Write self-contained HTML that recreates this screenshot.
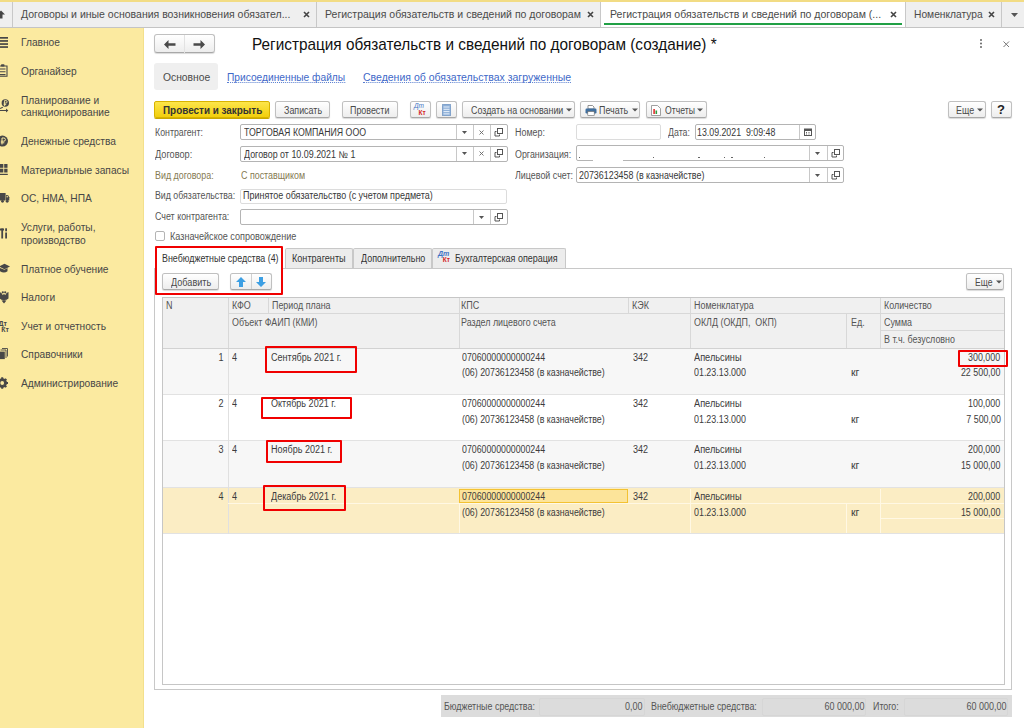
<!DOCTYPE html>
<html><head><meta charset="utf-8"><style>
html,body{margin:0;padding:0;width:1024px;height:728px;overflow:hidden;background:#fff;position:relative}
body>div,body>svg{position:absolute}
.t{white-space:nowrap;font-family:"Liberation Sans",sans-serif}
.btn{background:linear-gradient(#ffffff,#ededed);border:1px solid #c0c0c0;border-bottom-color:#a8a8a8;border-radius:2.5px;box-sizing:border-box;box-shadow:0 1px 1px rgba(0,0,0,.15)}
</style></head><body>
<div style="left:0px;top:0px;width:1024px;height:1.8px;background:#f2dc84"></div>
<div style="left:0px;top:2px;width:1024px;height:25px;background:#efefef"></div>
<div style="left:601px;top:2px;width:304px;height:25px;background:#fff"></div>
<div style="left:0px;top:27px;width:1024px;height:1px;background:#c4c4c4"></div>
<div style="left:12px;top:2px;width:1px;height:25px;background:#c8c8c8"></div>
<div style="left:316px;top:2px;width:1px;height:25px;background:#c8c8c8"></div>
<div style="left:600px;top:2px;width:1px;height:25px;background:#c8c8c8"></div>
<div style="left:905px;top:2px;width:1px;height:25px;background:#c8c8c8"></div>
<div style="left:1001px;top:2px;width:1px;height:25px;background:#c8c8c8"></div>
<div style="left:604px;top:23.3px;width:298px;height:1.9px;background:#21a046"></div>
<div class="t" style="left:21px;top:9.11px;font-size:10.5px;line-height:10.5px;color:#4a4a4a;font-weight:normal;transform:scaleX(1.0);transform-origin:0 0;">Договоры и иные основания возникновения обязател...</div>
<div class="t" style="left:325px;top:9.11px;font-size:10.5px;line-height:10.5px;color:#4a4a4a;font-weight:normal;transform:scaleX(1.0);transform-origin:0 0;">Регистрация обязательств и сведений по договорам</div>
<div class="t" style="left:610px;top:9.11px;font-size:10.5px;line-height:10.5px;color:#4a4a4a;font-weight:normal;transform:scaleX(1.0);transform-origin:0 0;">Регистрация обязательств и сведений по договорам (...</div>
<div class="t" style="left:914px;top:9.11px;font-size:10.5px;line-height:10.5px;color:#4a4a4a;font-weight:normal;transform:scaleX(0.975);transform-origin:0 0;">Номенклатура</div>
<svg style="left:303.0px;top:11px" width="7" height="7" viewBox="0 0 7 7"><path d="M1 1L6 6M6 1L1 6" stroke="#444" stroke-width="1.6"/></svg>
<svg style="left:587.0px;top:11px" width="7" height="7" viewBox="0 0 7 7"><path d="M1 1L6 6M6 1L1 6" stroke="#444" stroke-width="1.6"/></svg>
<svg style="left:890.0px;top:11px" width="7" height="7" viewBox="0 0 7 7"><path d="M1 1L6 6M6 1L1 6" stroke="#444" stroke-width="1.6"/></svg>
<svg style="left:987.5px;top:11px" width="7" height="7" viewBox="0 0 7 7"><path d="M1 1L6 6M6 1L1 6" stroke="#444" stroke-width="1.6"/></svg>
<svg style="left:1011px;top:12.5px" width="7" height="4" viewBox="0 0 7 4"><path d="M0 0H7L3.5 4Z" fill="#555"/></svg>
<svg style="left:-3.5px;top:9.5px" width="8" height="9" viewBox="0 0 8 9"><path d="M0 4.5L4 0.5L8 4.5H5.5V8.5H2.5V4.5Z" fill="#444"/></svg>
<div style="left:0px;top:28px;width:144px;height:700px;background:#fbeaa0"></div>
<div style="left:143px;top:28px;width:1px;height:700px;background:#f3e08c"></div>
<div class="t" style="left:21px;top:38.48px;font-size:10.3px;line-height:10.3px;color:#474747;font-weight:normal;transform:scaleX(0.99);transform-origin:0 0;">Главное</div>
<div class="t" style="left:21px;top:66.78px;font-size:10.3px;line-height:10.3px;color:#474747;font-weight:normal;transform:scaleX(0.99);transform-origin:0 0;">Органайзер</div>
<div class="t" style="left:21px;top:95.58px;font-size:10.3px;line-height:10.3px;color:#474747;font-weight:normal;transform:scaleX(0.99);transform-origin:0 0;">Планирование и</div>
<div class="t" style="left:21px;top:108.48px;font-size:10.3px;line-height:10.3px;color:#474747;font-weight:normal;transform:scaleX(0.99);transform-origin:0 0;">санкционирование</div>
<div class="t" style="left:21px;top:137.38px;font-size:10.3px;line-height:10.3px;color:#474747;font-weight:normal;transform:scaleX(0.99);transform-origin:0 0;">Денежные средства</div>
<div class="t" style="left:21px;top:165.58px;font-size:10.3px;line-height:10.3px;color:#474747;font-weight:normal;transform:scaleX(0.99);transform-origin:0 0;">Материальные запасы</div>
<div class="t" style="left:21px;top:194.28px;font-size:10.3px;line-height:10.3px;color:#474747;font-weight:normal;transform:scaleX(0.99);transform-origin:0 0;">ОС, НМА, НПА</div>
<div class="t" style="left:21px;top:222.58px;font-size:10.3px;line-height:10.3px;color:#474747;font-weight:normal;transform:scaleX(0.99);transform-origin:0 0;">Услуги, работы,</div>
<div class="t" style="left:21px;top:235.58px;font-size:10.3px;line-height:10.3px;color:#474747;font-weight:normal;transform:scaleX(0.99);transform-origin:0 0;">производство</div>
<div class="t" style="left:21px;top:265.08px;font-size:10.3px;line-height:10.3px;color:#474747;font-weight:normal;transform:scaleX(0.99);transform-origin:0 0;">Платное обучение</div>
<div class="t" style="left:21px;top:293.18px;font-size:10.3px;line-height:10.3px;color:#474747;font-weight:normal;transform:scaleX(0.99);transform-origin:0 0;">Налоги</div>
<div class="t" style="left:21px;top:321.78px;font-size:10.3px;line-height:10.3px;color:#474747;font-weight:normal;transform:scaleX(0.99);transform-origin:0 0;">Учет и отчетность</div>
<div class="t" style="left:21px;top:350.28px;font-size:10.3px;line-height:10.3px;color:#474747;font-weight:normal;transform:scaleX(0.99);transform-origin:0 0;">Справочники</div>
<div class="t" style="left:21px;top:379.08px;font-size:10.3px;line-height:10.3px;color:#474747;font-weight:normal;transform:scaleX(0.99);transform-origin:0 0;">Администрирование</div>
<div class="btn" style="left:154.4px;top:34.2px;width:60.2px;height:19.2px;border-radius:3px"></div>
<div style="left:184px;top:35.2px;width:1px;height:17.5px;background:#e2e2e2"></div>
<svg style="left:164px;top:40.2px" width="12" height="9" viewBox="0 0 12 9"><path d="M0 4.5L4.5 0V3.3H11.5V5.7H4.5V9Z" fill="#4a4a4a"/></svg>
<svg style="left:193px;top:40.2px" width="12" height="9" viewBox="0 0 12 9"><path d="M12 4.5L7.5 0V3.3H0.5V5.7H7.5V9Z" fill="#4a4a4a"/></svg>
<div class="t" style="left:251.5px;top:35.71px;font-size:16.4px;line-height:16.4px;color:#111;font-weight:normal;transform:scaleX(0.936);transform-origin:0 0;">Регистрация обязательств и сведений по договорам (создание) *</div>
<svg style="left:979px;top:39px" width="4" height="9" viewBox="0 0 4 9"><circle cx="2" cy="1" r="1" fill="#666"/><circle cx="2" cy="4.5" r="1" fill="#666"/><circle cx="2" cy="8" r="1" fill="#666"/></svg>
<svg style="left:1003px;top:40.5px" width="6.5" height="6.5" viewBox="0 0 6.5 6.5"><path d="M0.5 0.5L6 6M6 0.5L0.5 6" stroke="#777" stroke-width="1"/></svg>
<div style="left:154px;top:63px;width:64px;height:27px;background:#efefef;border-radius:3px"></div>
<div class="t" style="left:163px;top:73.13px;font-size:10px;line-height:10px;color:#4a4a4a;font-weight:normal;transform:scaleX(1.03);transform-origin:0 0;">Основное</div>
<div class="t" style="left:227px;top:73.13px;font-size:10px;line-height:10px;color:#4068c8;font-weight:normal;transform:scaleX(1.02);transform-origin:0 0;border-bottom:1px dotted #5a7fd0;height:9.2px">Присоединенные файлы</div>
<div class="t" style="left:363px;top:73.13px;font-size:10px;line-height:10px;color:#4068c8;font-weight:normal;transform:scaleX(1.05);transform-origin:0 0;border-bottom:1px dotted #5a7fd0;height:9.2px">Сведения об обязательствах загруженные</div>
<div style="left:154px;top:101px;width:116px;height:17px;border-radius:2px;background:linear-gradient(#fde54a,#f2cf0c);border:1px solid #d8b300;box-sizing:border-box;box-shadow:0 1px 0 #c9a800"></div>
<div class="t" style="left:163px;top:105.73px;font-size:10px;line-height:10px;color:#333;font-weight:bold;transform:scaleX(0.99);transform-origin:0 0;">Провести и закрыть</div>
<div class="btn" style="left:275.3px;top:101.3px;width:54.4px;height:17px"></div>
<div class="t" style="left:284px;top:105.93px;font-size:10px;line-height:10px;color:#4a4a4a;font-weight:normal;transform:scaleX(0.89);transform-origin:0 0;">Записать</div>
<div class="btn" style="left:342px;top:101px;width:55.5px;height:17px"></div>
<div class="t" style="left:350px;top:105.93px;font-size:10px;line-height:10px;color:#4a4a4a;font-weight:normal;transform:scaleX(0.89);transform-origin:0 0;">Провести</div>
<div class="btn" style="left:409.5px;top:101px;width:21px;height:17px"></div>
<div class="t" style="left:414px;top:102.5px;font-size:6.5px;line-height:6.5px;color:#3f72c4;font-style:italic">Дт</div>
<div class="t" style="left:418.5px;top:109.8px;font-size:6.5px;line-height:6.5px;color:#d42424;font-weight:bold">Кт</div>
<div class="btn" style="left:436px;top:101px;width:20.5px;height:17px"></div>
<svg style="left:442px;top:104px" width="9" height="12" viewBox="0 0 9 12"><rect x="0" y="0" width="9" height="12" rx="1.5" fill="#8eb0d8" stroke="#6f90bb" stroke-width="0.8"/><path d="M1.5 3H7.5M1.5 5.3H7.5M1.5 7.6H7.5M1.5 9.9H7.5" stroke="#e8f0fa" stroke-width="1"/></svg>
<div class="btn" style="left:462px;top:101px;width:112.5px;height:17px"></div>
<div class="t" style="left:471px;top:105.93px;font-size:10px;line-height:10px;color:#4a4a4a;font-weight:normal;transform:scaleX(0.89);transform-origin:0 0;">Создать на основании</div>
<svg style="left:565.5px;top:108px" width="6" height="4" viewBox="0 0 6 4"><path d="M0 0.5H6L3 3.5Z" fill="#555"/></svg>
<div class="btn" style="left:580.2px;top:101px;width:60.2px;height:17px"></div>
<svg style="left:585px;top:104.5px" width="12" height="11" viewBox="0 0 12 11"><path d="M3 0.5H7.5L9 2V4H3Z" fill="#fff" stroke="#777" stroke-width="0.8"/><rect x="0.5" y="3.5" width="11" height="5" rx="1.2" fill="#3f6f9f"/><rect x="2.8" y="6.5" width="6.4" height="4" fill="#fff" stroke="#666" stroke-width="0.6"/></svg>
<div class="t" style="left:599px;top:105.93px;font-size:10px;line-height:10px;color:#4a4a4a;font-weight:normal;transform:scaleX(0.89);transform-origin:0 0;">Печать</div>
<svg style="left:631.5px;top:108px" width="6" height="4" viewBox="0 0 6 4"><path d="M0 0.5H6L3 3.5Z" fill="#555"/></svg>
<div class="btn" style="left:646px;top:101px;width:60.5px;height:17px"></div>
<svg style="left:651px;top:104.5px" width="10" height="11" viewBox="0 0 10 11"><path d="M0.5 0.5H6.5L9.5 3.5V10.5H0.5Z" fill="#fff" stroke="#888" stroke-width="0.8"/><rect x="2.3" y="4" width="1.6" height="5" fill="#e03030"/><rect x="4.5" y="5.5" width="1.6" height="3.5" fill="#30a040"/></svg>
<div class="t" style="left:665px;top:105.93px;font-size:10px;line-height:10px;color:#4a4a4a;font-weight:normal;transform:scaleX(0.865);transform-origin:0 0;">Отчеты</div>
<svg style="left:697px;top:108px" width="6" height="4" viewBox="0 0 6 4"><path d="M0 0.5H6L3 3.5Z" fill="#555"/></svg>
<div class="btn" style="left:947.5px;top:101px;width:38px;height:17px"></div>
<div class="t" style="left:955.5px;top:105.93px;font-size:10px;line-height:10px;color:#4a4a4a;font-weight:normal;transform:scaleX(0.89);transform-origin:0 0;">Еще</div>
<svg style="left:976.5px;top:108px" width="6" height="4" viewBox="0 0 6 4"><path d="M0 0.5H6L3 3.5Z" fill="#555"/></svg>
<div class="btn" style="left:990.5px;top:101px;width:21px;height:17px"></div>
<div class="t" style="left:997px;top:102.5px;font-size:13px;line-height:13px;color:#222;font-weight:bold">?</div>
<div class="t" style="left:155px;top:128.13px;font-size:10px;line-height:10px;color:#555;font-weight:normal;transform:scaleX(0.88);transform-origin:0 0;">Контрагент:</div>
<div style="left:240px;top:124px;width:267.5px;height:16px;border:1px solid #b4b4b4;border-radius:2px;box-sizing:border-box;background:#fff"></div>
<div style="left:455.5px;top:125px;width:1px;height:14px;background:#c8c8c8"></div>
<div style="left:472.5px;top:125px;width:1px;height:14px;background:#c8c8c8"></div>
<div style="left:489.5px;top:125px;width:1px;height:14px;background:#c8c8c8"></div>
<div class="t" style="left:243.5px;top:128.13px;font-size:10px;line-height:10px;color:#383838;font-weight:normal;transform:scaleX(0.877);transform-origin:0 0;">ТОРГОВАЯ КОМПАНИЯ ООО</div>
<div class="t" style="left:155px;top:149.63px;font-size:10px;line-height:10px;color:#555;font-weight:normal;transform:scaleX(0.92);transform-origin:0 0;">Договор:</div>
<div style="left:240px;top:145.5px;width:267.5px;height:16px;border:1px solid #b4b4b4;border-radius:2px;box-sizing:border-box;background:#fff"></div>
<div style="left:455.5px;top:146.5px;width:1px;height:14px;background:#c8c8c8"></div>
<div style="left:472.5px;top:146.5px;width:1px;height:14px;background:#c8c8c8"></div>
<div style="left:489.5px;top:146.5px;width:1px;height:14px;background:#c8c8c8"></div>
<div class="t" style="left:243.5px;top:149.63px;font-size:10px;line-height:10px;color:#383838;font-weight:normal;transform:scaleX(0.89);transform-origin:0 0;">Договор от 10.09.2021 № 1</div>
<svg style="left:461.5px;top:130.8px" width="5" height="3" viewBox="0 0 5 3"><path d="M0 0H5L2.5 3Z" fill="#555"/></svg>
<svg style="left:478.5px;top:129.8px" width="5" height="5" viewBox="0 0 5 5"><path d="M0.5 0.5L4.5 4.5M4.5 0.5L0.5 4.5" stroke="#666" stroke-width="0.9"/></svg>
<svg style="left:494.0px;top:127.80000000000001px" width="9" height="9" viewBox="0 0 9 9"><rect x="3.5" y="0.5" width="5" height="5" fill="none" stroke="#555" stroke-width="1"/><path d="M1 3.5H2.5M1 3.5V8H5.5V6.5" fill="none" stroke="#555" stroke-width="1"/></svg>
<svg style="left:461.5px;top:152.3px" width="5" height="3" viewBox="0 0 5 3"><path d="M0 0H5L2.5 3Z" fill="#555"/></svg>
<svg style="left:478.5px;top:151.3px" width="5" height="5" viewBox="0 0 5 5"><path d="M0.5 0.5L4.5 4.5M4.5 0.5L0.5 4.5" stroke="#666" stroke-width="0.9"/></svg>
<svg style="left:494.0px;top:149.3px" width="9" height="9" viewBox="0 0 9 9"><rect x="3.5" y="0.5" width="5" height="5" fill="none" stroke="#555" stroke-width="1"/><path d="M1 3.5H2.5M1 3.5V8H5.5V6.5" fill="none" stroke="#555" stroke-width="1"/></svg>
<div class="t" style="left:155px;top:171.03px;font-size:10px;line-height:10px;color:#857a52;font-weight:normal;transform:scaleX(0.89);transform-origin:0 0;">Вид договора:</div>
<div class="t" style="left:240.7px;top:171.03px;font-size:10px;line-height:10px;color:#857a52;font-weight:normal;transform:scaleX(0.89);transform-origin:0 0;">С поставщиком</div>
<div class="t" style="left:155px;top:191.33px;font-size:10px;line-height:10px;color:#555;font-weight:normal;transform:scaleX(0.88);transform-origin:0 0;">Вид обязательства:</div>
<div style="left:240px;top:188.5px;width:267px;height:15.5px;border:1px solid #dcdcdc;border-radius:2px;box-sizing:border-box;background:#fff"></div>
<div class="t" style="left:243px;top:191.33px;font-size:10px;line-height:10px;color:#383838;font-weight:normal;transform:scaleX(0.896);transform-origin:0 0;">Принятое обязательство (с учетом предмета)</div>
<div class="t" style="left:155px;top:212.33px;font-size:10px;line-height:10px;color:#555;font-weight:normal;transform:scaleX(0.89);transform-origin:0 0;">Счет контрагента:</div>
<div style="left:240px;top:209.3px;width:267.5px;height:15.7px;border:1px solid #b4b4b4;border-radius:2px;box-sizing:border-box;background:#fff"></div>
<div style="left:472.5px;top:210.3px;width:1px;height:13.7px;background:#c8c8c8"></div>
<div style="left:489.5px;top:210.3px;width:1px;height:13.7px;background:#c8c8c8"></div>
<svg style="left:478.5px;top:215.7px" width="5" height="3" viewBox="0 0 5 3"><path d="M0 0H5L2.5 3Z" fill="#555"/></svg>
<svg style="left:494.0px;top:212.7px" width="9" height="9" viewBox="0 0 9 9"><rect x="3.5" y="0.5" width="5" height="5" fill="none" stroke="#555" stroke-width="1"/><path d="M1 3.5H2.5M1 3.5V8H5.5V6.5" fill="none" stroke="#555" stroke-width="1"/></svg>
<div style="left:155.2px;top:231.3px;width:10.2px;height:10.2px;border:1px solid #b4b4b4;border-radius:2px;box-sizing:border-box;background:#fff"></div>
<div class="t" style="left:170px;top:231.53px;font-size:10px;line-height:10px;color:#555;font-weight:normal;transform:scaleX(0.908);transform-origin:0 0;">Казначейское сопровождение</div>
<div class="t" style="left:515px;top:128.13px;font-size:10px;line-height:10px;color:#555;font-weight:normal;transform:scaleX(0.89);transform-origin:0 0;">Номер:</div>
<div style="left:576px;top:124px;width:84.5px;height:16px;border:1px solid #dcdcdc;border-radius:2px;box-sizing:border-box;background:#fff"></div>
<div class="t" style="left:668px;top:128.13px;font-size:10px;line-height:10px;color:#555;font-weight:normal;transform:scaleX(0.88);transform-origin:0 0;">Дата:</div>
<div style="left:694.5px;top:124px;width:121.5px;height:16px;border:1px solid #b4b4b4;border-radius:2px;box-sizing:border-box;background:#fff"></div>
<div style="left:799px;top:125px;width:1px;height:14px;background:#c8c8c8"></div>
<div class="t" style="left:697px;top:128.13px;font-size:10px;line-height:10px;color:#383838;font-weight:normal;transform:scaleX(0.88);transform-origin:0 0;">13.09.2021&nbsp;&nbsp;9:09:48</div>
<svg style="left:803.5px;top:128px" width="8" height="8" viewBox="0 0 8 8"><rect x="0.5" y="1" width="7" height="6.5" fill="none" stroke="#555" stroke-width="1"/><rect x="0.5" y="1" width="7" height="2" fill="#555"/><path d="M2 4.5H3M4.5 4.5H5.5M2 6H3M4.5 6H5.5" stroke="#555" stroke-width="0.9"/></svg>
<div class="t" style="left:515px;top:149.63px;font-size:10px;line-height:10px;color:#555;font-weight:normal;transform:scaleX(0.89);transform-origin:0 0;">Организация:</div>
<div style="left:576px;top:145.3px;width:267.5px;height:16px;border:1px solid #b4b4b4;border-radius:2px;box-sizing:border-box;background:#fff"></div>
<div style="left:808.5px;top:146.3px;width:1px;height:14px;background:#c8c8c8"></div>
<div style="left:826.5px;top:146.3px;width:1px;height:14px;background:#c8c8c8"></div>
<svg style="left:815.0px;top:152.0px" width="5" height="3" viewBox="0 0 5 3"><path d="M0 0H5L2.5 3Z" fill="#555"/></svg>
<svg style="left:830.5px;top:149.0px" width="9" height="9" viewBox="0 0 9 9"><rect x="3.5" y="0.5" width="5" height="5" fill="none" stroke="#555" stroke-width="1"/><path d="M1 3.5H2.5M1 3.5V8H5.5V6.5" fill="none" stroke="#555" stroke-width="1"/></svg>
<div style="left:579.3px;top:156.8px;width:1.2px;height:1.3px;background:#666"></div>
<div style="left:652.7px;top:156.8px;width:1px;height:1.3px;background:#666"></div>
<div style="left:697.5px;top:156.8px;width:2px;height:1.3px;background:#666"></div>
<div style="left:723.8px;top:156.8px;width:1px;height:1.3px;background:#666"></div>
<div style="left:731.2px;top:156.8px;width:2px;height:1.3px;background:#666"></div>
<div style="left:764.3px;top:156.8px;width:1px;height:1.3px;background:#666"></div>
<div style="left:592.5px;top:160px;width:30.5px;height:2px;background:#fff"></div>
<div class="t" style="left:515px;top:170.83px;font-size:10px;line-height:10px;color:#555;font-weight:normal;transform:scaleX(0.89);transform-origin:0 0;">Лицевой счет:</div>
<div style="left:576px;top:166.7px;width:267.5px;height:16px;border:1px solid #b4b4b4;border-radius:2px;box-sizing:border-box;background:#fff"></div>
<div style="left:808.5px;top:167.7px;width:1px;height:14px;background:#c8c8c8"></div>
<div style="left:826.5px;top:167.7px;width:1px;height:14px;background:#c8c8c8"></div>
<div class="t" style="left:579px;top:170.83px;font-size:10px;line-height:10px;color:#383838;font-weight:normal;transform:scaleX(0.89);transform-origin:0 0;">20736123458 (в казначействе)</div>
<svg style="left:815.0px;top:173.5px" width="5" height="3" viewBox="0 0 5 3"><path d="M0 0H5L2.5 3Z" fill="#555"/></svg>
<svg style="left:830.5px;top:170.5px" width="9" height="9" viewBox="0 0 9 9"><rect x="3.5" y="0.5" width="5" height="5" fill="none" stroke="#555" stroke-width="1"/><path d="M1 3.5H2.5M1 3.5V8H5.5V6.5" fill="none" stroke="#555" stroke-width="1"/></svg>
<div style="left:154px;top:267.5px;width:857.5px;height:422.3px;border:1px solid #c8c8c8;border-top:none;box-sizing:border-box"></div>
<div style="left:283px;top:267.5px;width:729px;height:1px;background:#c8c8c8"></div>
<div style="left:285px;top:247.5px;width:68px;height:20.5px;background:#ececec;border:1px solid #c8c8c8;border-bottom:none;border-radius:2px 2px 0 0;box-sizing:border-box"></div>
<div style="left:352.5px;top:247.5px;width:79.5px;height:20.5px;background:#ececec;border:1px solid #c8c8c8;border-bottom:none;border-radius:2px 2px 0 0;box-sizing:border-box"></div>
<div style="left:431.5px;top:247.5px;width:134.0px;height:20.5px;background:#ececec;border:1px solid #c8c8c8;border-bottom:none;border-radius:2px 2px 0 0;box-sizing:border-box"></div>
<div class="t" style="left:161.7px;top:253.53px;font-size:10px;line-height:10px;color:#333;font-weight:normal;transform:scaleX(0.889);transform-origin:0 0;">Внебюджетные средства (4)</div>
<div class="t" style="left:292.3px;top:253.53px;font-size:10px;line-height:10px;color:#333;font-weight:normal;transform:scaleX(0.91);transform-origin:0 0;">Контрагенты</div>
<div class="t" style="left:360.6px;top:253.53px;font-size:10px;line-height:10px;color:#333;font-weight:normal;transform:scaleX(0.894);transform-origin:0 0;">Дополнительно</div>
<div class="t" style="left:438px;top:250.3px;font-size:7px;line-height:7px;color:#3f72c4;font-style:italic;font-weight:bold">Дт</div>
<div class="t" style="left:442.8px;top:257px;font-size:6.5px;line-height:6.5px;color:#d42424;font-weight:bold">Кт</div>
<div class="t" style="left:455.3px;top:253.53px;font-size:10px;line-height:10px;color:#333;font-weight:normal;transform:scaleX(0.897);transform-origin:0 0;">Бухгалтерская операция</div>
<div class="btn" style="left:161.7px;top:273px;width:57px;height:16.5px"></div>
<div class="t" style="left:170.5px;top:277.53px;font-size:10px;line-height:10px;color:#4a4a4a;font-weight:normal;transform:scaleX(0.91);transform-origin:0 0;">Добавить</div>
<div class="btn" style="left:230.4px;top:272.6px;width:42px;height:17px"></div>
<div style="left:251.3px;top:273.6px;width:1px;height:15.5px;background:#d0d0d0"></div>
<svg style="left:235.5px;top:276.5px" width="10" height="10" viewBox="0 0 10 10"><path d="M5 0L10 5H7V10H3V5H0Z" fill="#3d9fe3"/></svg>
<svg style="left:256px;top:276.5px" width="10" height="10" viewBox="0 0 10 10"><path d="M5 10L10 5H7V0H3V5H0Z" fill="#3d9fe3"/></svg>
<div class="btn" style="left:966.3px;top:273px;width:37.6px;height:17px"></div>
<div class="t" style="left:974.5px;top:277.53px;font-size:10px;line-height:10px;color:#4a4a4a;font-weight:normal;transform:scaleX(0.86);transform-origin:0 0;">Еще</div>
<svg style="left:995.5px;top:280px" width="6" height="4" viewBox="0 0 6 4"><path d="M0 0.5H6L3 3.5Z" fill="#555"/></svg>
<div style="left:161.5px;top:296.5px;width:843px;height:388px;border:1px solid #c6c6c6;box-sizing:border-box;background:#fff"></div>
<div style="left:162.5px;top:297.5px;width:841px;height:50.5px;background:#f0f0f0"></div>
<div style="left:162.5px;top:348px;width:841px;height:1px;background:#d2d2d2"></div>
<div style="left:227.5px;top:297.5px;width:1px;height:50.5px;background:#d8d8d8"></div>
<div style="left:228px;top:313px;width:775.5px;height:1px;background:#d8d8d8"></div>
<div style="left:267.5px;top:297.5px;width:1px;height:15.5px;background:#d8d8d8"></div>
<div style="left:458.5px;top:297.5px;width:1px;height:50.5px;background:#d8d8d8"></div>
<div style="left:627.5px;top:297.5px;width:1px;height:15.5px;background:#d8d8d8"></div>
<div style="left:690px;top:297.5px;width:1px;height:50.5px;background:#d8d8d8"></div>
<div style="left:846px;top:313.5px;width:1px;height:34.5px;background:#d8d8d8"></div>
<div style="left:879.5px;top:297.5px;width:1px;height:50.5px;background:#d8d8d8"></div>
<div style="left:880px;top:330px;width:123.5px;height:1px;background:#d8d8d8"></div>
<div style="left:228px;top:313px;width:1px;height:0px;"></div>
<div class="t" style="left:166px;top:300.83px;font-size:10px;line-height:10px;color:#555;font-weight:normal;transform:scaleX(0.9);transform-origin:0 0;">N</div>
<div class="t" style="left:232px;top:300.83px;font-size:10px;line-height:10px;color:#555;font-weight:normal;transform:scaleX(0.9);transform-origin:0 0;">КФО</div>
<div class="t" style="left:271.5px;top:300.83px;font-size:10px;line-height:10px;color:#555;font-weight:normal;transform:scaleX(0.89);transform-origin:0 0;">Период плана</div>
<div class="t" style="left:461.2px;top:300.83px;font-size:10px;line-height:10px;color:#555;font-weight:normal;transform:scaleX(0.9);transform-origin:0 0;">КПС</div>
<div class="t" style="left:632.2px;top:300.83px;font-size:10px;line-height:10px;color:#555;font-weight:normal;transform:scaleX(0.9);transform-origin:0 0;">КЭК</div>
<div class="t" style="left:694.4px;top:300.83px;font-size:10px;line-height:10px;color:#555;font-weight:normal;transform:scaleX(0.89);transform-origin:0 0;">Номенклатура</div>
<div class="t" style="left:884px;top:300.83px;font-size:10px;line-height:10px;color:#555;font-weight:normal;transform:scaleX(0.89);transform-origin:0 0;">Количество</div>
<div class="t" style="left:232px;top:317.83px;font-size:10px;line-height:10px;color:#555;font-weight:normal;transform:scaleX(0.89);transform-origin:0 0;">Объект ФАИП (КМИ)</div>
<div class="t" style="left:461.2px;top:317.83px;font-size:10px;line-height:10px;color:#555;font-weight:normal;transform:scaleX(0.89);transform-origin:0 0;">Раздел лицевого счета</div>
<div class="t" style="left:694.4px;top:317.83px;font-size:10px;line-height:10px;color:#555;font-weight:normal;transform:scaleX(0.89);transform-origin:0 0;">ОКЛД (ОКДП,&nbsp; ОКП)</div>
<div class="t" style="left:850.5px;top:317.83px;font-size:10px;line-height:10px;color:#555;font-weight:normal;transform:scaleX(0.9);transform-origin:0 0;">Ед.</div>
<div class="t" style="left:884px;top:317.83px;font-size:10px;line-height:10px;color:#555;font-weight:normal;transform:scaleX(0.89);transform-origin:0 0;">Сумма</div>
<div class="t" style="left:884px;top:334.83px;font-size:10px;line-height:10px;color:#555;font-weight:normal;transform:scaleX(0.89);transform-origin:0 0;">В т.ч. безусловно</div>
<div style="left:162.5px;top:348.5px;width:841px;height:46px;background:#f7f7f7"></div>
<div style="left:162.5px;top:394.0px;width:841px;height:1px;background:#e2e2e2"></div>
<div class="t" style="right:800.3px;top:352.53px;font-size:10px;line-height:10px;color:#3c3c3c;font-weight:normal;transform:scaleX(0.9);transform-origin:100% 0;">1</div>
<div class="t" style="left:232.3px;top:352.53px;font-size:10px;line-height:10px;color:#3c3c3c;font-weight:normal;transform:scaleX(0.9);transform-origin:0 0;">4</div>
<div class="t" style="left:271.2px;top:352.53px;font-size:10px;line-height:10px;color:#3c3c3c;font-weight:normal;transform:scaleX(0.905);transform-origin:0 0;">Сентябрь 2021 г.</div>
<div class="t" style="left:462.2px;top:352.53px;font-size:10px;line-height:10px;color:#3c3c3c;font-weight:normal;transform:scaleX(0.878);transform-origin:0 0;">07060000000000244</div>
<div class="t" style="left:462.2px;top:368.43px;font-size:10px;line-height:10px;color:#3c3c3c;font-weight:normal;transform:scaleX(0.884);transform-origin:0 0;">(06) 20736123458 (в казначействе)</div>
<div class="t" style="left:632.6px;top:352.53px;font-size:10px;line-height:10px;color:#3c3c3c;font-weight:normal;transform:scaleX(0.9);transform-origin:0 0;">342</div>
<div class="t" style="left:694.4px;top:352.53px;font-size:10px;line-height:10px;color:#3c3c3c;font-weight:normal;transform:scaleX(0.92);transform-origin:0 0;">Апельсины</div>
<div class="t" style="left:694.4px;top:368.43px;font-size:10px;line-height:10px;color:#3c3c3c;font-weight:normal;transform:scaleX(0.89);transform-origin:0 0;">01.23.13.000</div>
<div class="t" style="left:851px;top:368.43px;font-size:10px;line-height:10px;color:#3c3c3c;font-weight:normal;transform:scaleX(1.05);transform-origin:0 0;">кг</div>
<div class="t" style="right:23.399999999999977px;top:352.53px;font-size:10px;line-height:10px;color:#3c3c3c;font-weight:normal;transform:scaleX(0.89);transform-origin:100% 0;">300,000</div>
<div class="t" style="right:23.399999999999977px;top:368.43px;font-size:10px;line-height:10px;color:#3c3c3c;font-weight:normal;transform:scaleX(0.89);transform-origin:100% 0;">22 500,00</div>
<div style="left:162.5px;top:394.8px;width:841px;height:46px;background:#ffffff"></div>
<div style="left:162.5px;top:440.3px;width:841px;height:1px;background:#e2e2e2"></div>
<div class="t" style="right:800.3px;top:398.83px;font-size:10px;line-height:10px;color:#3c3c3c;font-weight:normal;transform:scaleX(0.9);transform-origin:100% 0;">2</div>
<div class="t" style="left:232.3px;top:398.83px;font-size:10px;line-height:10px;color:#3c3c3c;font-weight:normal;transform:scaleX(0.9);transform-origin:0 0;">4</div>
<div class="t" style="left:271.2px;top:398.83px;font-size:10px;line-height:10px;color:#3c3c3c;font-weight:normal;transform:scaleX(0.905);transform-origin:0 0;">Октябрь 2021 г.</div>
<div class="t" style="left:462.2px;top:398.83px;font-size:10px;line-height:10px;color:#3c3c3c;font-weight:normal;transform:scaleX(0.878);transform-origin:0 0;">07060000000000244</div>
<div class="t" style="left:462.2px;top:414.73px;font-size:10px;line-height:10px;color:#3c3c3c;font-weight:normal;transform:scaleX(0.884);transform-origin:0 0;">(06) 20736123458 (в казначействе)</div>
<div class="t" style="left:632.6px;top:398.83px;font-size:10px;line-height:10px;color:#3c3c3c;font-weight:normal;transform:scaleX(0.9);transform-origin:0 0;">342</div>
<div class="t" style="left:694.4px;top:398.83px;font-size:10px;line-height:10px;color:#3c3c3c;font-weight:normal;transform:scaleX(0.92);transform-origin:0 0;">Апельсины</div>
<div class="t" style="left:694.4px;top:414.73px;font-size:10px;line-height:10px;color:#3c3c3c;font-weight:normal;transform:scaleX(0.89);transform-origin:0 0;">01.23.13.000</div>
<div class="t" style="left:851px;top:414.73px;font-size:10px;line-height:10px;color:#3c3c3c;font-weight:normal;transform:scaleX(1.05);transform-origin:0 0;">кг</div>
<div class="t" style="right:23.399999999999977px;top:398.83px;font-size:10px;line-height:10px;color:#3c3c3c;font-weight:normal;transform:scaleX(0.89);transform-origin:100% 0;">100,000</div>
<div class="t" style="right:23.399999999999977px;top:414.73px;font-size:10px;line-height:10px;color:#3c3c3c;font-weight:normal;transform:scaleX(0.89);transform-origin:100% 0;">7 500,00</div>
<div style="left:162.5px;top:441px;width:841px;height:46px;background:#f7f7f7"></div>
<div style="left:162.5px;top:486.5px;width:841px;height:1px;background:#e2e2e2"></div>
<div class="t" style="right:800.3px;top:445.03px;font-size:10px;line-height:10px;color:#3c3c3c;font-weight:normal;transform:scaleX(0.9);transform-origin:100% 0;">3</div>
<div class="t" style="left:232.3px;top:445.03px;font-size:10px;line-height:10px;color:#3c3c3c;font-weight:normal;transform:scaleX(0.9);transform-origin:0 0;">4</div>
<div class="t" style="left:271.2px;top:445.03px;font-size:10px;line-height:10px;color:#3c3c3c;font-weight:normal;transform:scaleX(0.905);transform-origin:0 0;">Ноябрь 2021 г.</div>
<div class="t" style="left:462.2px;top:445.03px;font-size:10px;line-height:10px;color:#3c3c3c;font-weight:normal;transform:scaleX(0.878);transform-origin:0 0;">07060000000000244</div>
<div class="t" style="left:462.2px;top:460.93px;font-size:10px;line-height:10px;color:#3c3c3c;font-weight:normal;transform:scaleX(0.884);transform-origin:0 0;">(06) 20736123458 (в казначействе)</div>
<div class="t" style="left:632.6px;top:445.03px;font-size:10px;line-height:10px;color:#3c3c3c;font-weight:normal;transform:scaleX(0.9);transform-origin:0 0;">342</div>
<div class="t" style="left:694.4px;top:445.03px;font-size:10px;line-height:10px;color:#3c3c3c;font-weight:normal;transform:scaleX(0.92);transform-origin:0 0;">Апельсины</div>
<div class="t" style="left:694.4px;top:460.93px;font-size:10px;line-height:10px;color:#3c3c3c;font-weight:normal;transform:scaleX(0.89);transform-origin:0 0;">01.23.13.000</div>
<div class="t" style="left:851px;top:460.93px;font-size:10px;line-height:10px;color:#3c3c3c;font-weight:normal;transform:scaleX(1.05);transform-origin:0 0;">кг</div>
<div class="t" style="right:23.399999999999977px;top:445.03px;font-size:10px;line-height:10px;color:#3c3c3c;font-weight:normal;transform:scaleX(0.89);transform-origin:100% 0;">200,000</div>
<div class="t" style="right:23.399999999999977px;top:460.93px;font-size:10px;line-height:10px;color:#3c3c3c;font-weight:normal;transform:scaleX(0.89);transform-origin:100% 0;">15 000,00</div>
<div style="left:162.5px;top:487.8px;width:841px;height:45.5px;background:#fbedc4"></div>
<div style="left:162.5px;top:532.8px;width:841px;height:1px;background:#e2e2e2"></div>
<div class="t" style="right:800.3px;top:491.83px;font-size:10px;line-height:10px;color:#3c3c3c;font-weight:normal;transform:scaleX(0.9);transform-origin:100% 0;">4</div>
<div class="t" style="left:232.3px;top:491.83px;font-size:10px;line-height:10px;color:#3c3c3c;font-weight:normal;transform:scaleX(0.9);transform-origin:0 0;">4</div>
<div class="t" style="left:271.2px;top:491.83px;font-size:10px;line-height:10px;color:#3c3c3c;font-weight:normal;transform:scaleX(0.905);transform-origin:0 0;">Декабрь 2021 г.</div>
<div class="t" style="left:462.2px;top:491.83px;font-size:10px;line-height:10px;color:#3c3c3c;font-weight:normal;transform:scaleX(0.878);transform-origin:0 0;">07060000000000244</div>
<div class="t" style="left:462.2px;top:507.73px;font-size:10px;line-height:10px;color:#3c3c3c;font-weight:normal;transform:scaleX(0.884);transform-origin:0 0;">(06) 20736123458 (в казначействе)</div>
<div class="t" style="left:632.6px;top:491.83px;font-size:10px;line-height:10px;color:#3c3c3c;font-weight:normal;transform:scaleX(0.9);transform-origin:0 0;">342</div>
<div class="t" style="left:694.4px;top:491.83px;font-size:10px;line-height:10px;color:#3c3c3c;font-weight:normal;transform:scaleX(0.92);transform-origin:0 0;">Апельсины</div>
<div class="t" style="left:694.4px;top:507.73px;font-size:10px;line-height:10px;color:#3c3c3c;font-weight:normal;transform:scaleX(0.89);transform-origin:0 0;">01.23.13.000</div>
<div class="t" style="left:851px;top:507.73px;font-size:10px;line-height:10px;color:#3c3c3c;font-weight:normal;transform:scaleX(1.05);transform-origin:0 0;">кг</div>
<div class="t" style="right:23.399999999999977px;top:491.83px;font-size:10px;line-height:10px;color:#3c3c3c;font-weight:normal;transform:scaleX(0.89);transform-origin:100% 0;">200,000</div>
<div class="t" style="right:23.399999999999977px;top:507.73px;font-size:10px;line-height:10px;color:#3c3c3c;font-weight:normal;transform:scaleX(0.89);transform-origin:100% 0;">15 000,00</div>
<div style="left:227.7px;top:348.5px;width:1px;height:185px;background:#e0e0e0"></div>
<div style="left:228px;top:502.8px;width:775.5px;height:1px;background:#fff8e4"></div>
<div style="left:690px;top:488.5px;width:1px;height:44.5px;background:#fff8e4"></div>
<div style="left:846px;top:503px;width:1px;height:30px;background:#fff8e4"></div>
<div style="left:879.5px;top:488.5px;width:1px;height:44.5px;background:#fff8e4"></div>
<div style="left:880px;top:517.5px;width:123.5px;height:1px;background:#fff8e4"></div>
<div style="left:458.5px;top:488.5px;width:1px;height:44.5px;background:#fff8e4"></div>
<div style="left:459.3px;top:489px;width:168.4px;height:13.8px;border:1.5px solid #f3c232;box-sizing:border-box;background:#fce49a"></div>
<div class="t" style="left:462.2px;top:491.83px;font-size:10px;line-height:10px;color:#3c3c3c;font-weight:normal;transform:scaleX(0.878);transform-origin:0 0;">07060000000000244</div>
<div style="left:155px;top:246.2px;width:128.3px;height:49.30000000000001px;border:2px solid #f00000;box-sizing:border-box;border-radius:1px"></div>
<div style="left:265px;top:346.4px;width:91.5px;height:26.30000000000001px;border:2px solid #f00000;box-sizing:border-box;border-radius:1px"></div>
<div style="left:261.3px;top:396.9px;width:90.30000000000001px;height:22.30000000000001px;border:2px solid #f00000;box-sizing:border-box;border-radius:1px"></div>
<div style="left:265.6px;top:439.7px;width:76.39999999999998px;height:23.600000000000023px;border:2px solid #f00000;box-sizing:border-box;border-radius:1px"></div>
<div style="left:263px;top:484.8px;width:82.5px;height:26.399999999999977px;border:2px solid #f00000;box-sizing:border-box;border-radius:1px"></div>
<div style="left:958.4px;top:350.3px;width:49.60000000000002px;height:17.19999999999999px;border:2px solid #f00000;box-sizing:border-box;border-radius:1px"></div>
<div style="left:440.6px;top:695.3px;width:571.7px;height:22.2px;background:#dcdcdc"></div>
<div class="t" style="left:444px;top:701.73px;font-size:10px;line-height:10px;color:#555;font-weight:normal;transform:scaleX(0.89);transform-origin:0 0;">Бюджетные средства:</div>
<div style="left:539px;top:697.5px;width:105.6px;height:18px;border:1px solid #d6d6d6;border-radius:2px;box-sizing:border-box"></div>
<div class="t" style="right:381.4px;top:701.73px;font-size:10px;line-height:10px;color:#555;font-weight:normal;transform:scaleX(0.9);transform-origin:100% 0;">0,00</div>
<div class="t" style="left:651.4px;top:701.73px;font-size:10px;line-height:10px;color:#555;font-weight:normal;transform:scaleX(0.89);transform-origin:0 0;">Внебюджетные средства:</div>
<div style="left:761.5px;top:697.5px;width:104.5px;height:18px;border:1px solid #d6d6d6;border-radius:2px;box-sizing:border-box"></div>
<div class="t" style="right:160px;top:701.73px;font-size:10px;line-height:10px;color:#555;font-weight:normal;transform:scaleX(0.9);transform-origin:100% 0;">60 000,00</div>
<div class="t" style="left:872.8px;top:701.73px;font-size:10px;line-height:10px;color:#555;font-weight:normal;transform:scaleX(0.89);transform-origin:0 0;">Итого:</div>
<div style="left:904px;top:697.5px;width:103.8px;height:18px;border:1px solid #d6d6d6;border-radius:2px;box-sizing:border-box"></div>
<div class="t" style="right:17.700000000000045px;top:701.73px;font-size:10px;line-height:10px;color:#555;font-weight:normal;transform:scaleX(0.9);transform-origin:100% 0;">60 000,00</div>
<svg style="left:0;top:28px" width="14" height="370" viewBox="0 28 14 370">
<g fill="#474747">
<rect x="0" y="37" width="8" height="1.7"/><rect x="0" y="40.1" width="8" height="1.7"/><rect x="0" y="43.2" width="8" height="1.7"/><rect x="0" y="46.2" width="8" height="1.7"/>
</g>
<g fill="none" stroke="#474747" stroke-width="1.1"><path d="M-1 66H7V76.3H-1"/><path d="M0 69H5.5M0 71.8H5.5M0 74.6H5.5"/></g>
<rect x="1" y="64.3" width="3.5" height="2.2" rx="0.8" fill="#474747"/>
<circle cx="5.3" cy="103" r="3.7" fill="#474747"/><path d="M4.6 100.5V106M4.6 100.5H5.8A1.3 1.3 0 0 1 5.8 103.1H3.6M3.6 104.6H6.2" fill="none" stroke="#fbeaa0" stroke-width="0.9"/>
<path d="M0 108.6L2.8 107.2M0 110.5H7.2" fill="none" stroke="#474747" stroke-width="1.1"/><path d="M6 108.6L8.3 110.5L6 112.4Z" fill="#474747"/>
<circle cx="2.5" cy="141.1" r="5.5" fill="#474747"/><path d="M2 138V144.5M2 138H3.8A1.6 1.6 0 0 1 3.8 141.2H0.8M0.8 142.8H4.3" fill="none" stroke="#fbeaa0" stroke-width="1"/>
<g fill="#474747"><rect x="0" y="164" width="3.3" height="3.8"/><rect x="4.2" y="164" width="3.3" height="3.8"/><rect x="0" y="168.7" width="3.3" height="3.8"/><rect x="4.2" y="168.7" width="3.3" height="3.8"/><rect x="0" y="173.8" width="7.8" height="1.2"/></g>
<g fill="#474747"><rect x="0" y="193" width="5.6" height="7.5"/><path d="M6 195H8L9.3 197.3V200.5H6Z"/><circle cx="2.5" cy="201.3" r="1.4"/><circle cx="7.2" cy="201.3" r="1.4"/></g>
<rect x="6.6" y="195.8" width="1.2" height="1.6" fill="#fbeaa0"/>
<g fill="#474747"><rect x="0" y="228.5" width="4" height="2"/><rect x="1.3" y="228.5" width="1.8" height="10"/><rect x="5.2" y="228.3" width="1.8" height="3"/><rect x="5.2" y="232.5" width="1.8" height="6"/></g>
<path d="M-1 266.5L4.5 263.8L10 266.5L4.5 269.2Z" fill="#474747"/><path d="M0 268V271.2Q4 274 7.5 271.2V268L4.5 269.8Z" fill="#474747"/>
<g fill="#474747"><ellipse cx="4" cy="297.5" rx="2.3" ry="3.2"/><path d="M-0.5 292L1.5 293L3 296L1.8 300L-0.5 298.5ZM8.5 292L6.5 293L5 296L6.2 300L8.5 298.5Z"/><path d="M1.5 300.5L4 303.5L6.5 300.5Z"/><circle cx="2.8" cy="292.3" r="1.1"/><circle cx="5.2" cy="292.3" r="1.1"/></g>
<g fill="#474747" font-family="Liberation Sans" font-weight="bold" font-size="7"><text x="-1.5" y="325.5">Дт</text><text x="1.2" y="331.8">Кт</text></g>
<g fill="none" stroke="#474747" stroke-width="0.9"><path d="M2 348.5H7.5V356.5"/><path d="M0.5 350H6V358"/></g><rect x="-1" y="351.6" width="5.8" height="7.5" fill="#474747"/>
<g transform="translate(2.2 383)"><circle r="3.7" fill="none" stroke="#474747" stroke-width="2.2"/><g stroke="#474747" stroke-width="2"><path d="M0 -5.8V5.8M-5.8 0H5.8M-4.1 -4.1L4.1 4.1M4.1 -4.1L-4.1 4.1"/></g><circle r="1.9" fill="#fbeaa0"/></g>
</svg>
</body></html>
